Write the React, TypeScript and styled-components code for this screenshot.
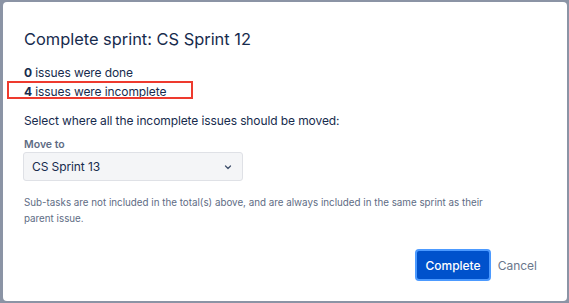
import { createGlobalStyle } from "styled-components";
import styled from "styled-components";

const GlobalStyle = createGlobalStyle`
  html, body {
    margin: 0;
    padding: 0;
    background: #8b94a5;
  }
  body {
    font-family: Inter, "Noto Sans", sans-serif;
    color: #172b4d;
  }
`;

const Backdrop = styled.div`
  width: 569px;
  height: 303px;
  padding: 2px 2px 2px 3px;
  box-sizing: border-box;
  overflow: hidden;
`;

const Modal = styled.div`
  background: #ffffff;
  border-radius: 4px;
  height: 100%;
  box-sizing: border-box;
  padding: 25px 21px 0 21px;
  display: flex;
  flex-direction: column;
`;

const Title = styled.h1`
  margin: 0;
  font-size: 16.4px;
  font-weight: 400;
  line-height: 24px;
  color: #172b4d;
`;

const Summary = styled.div`
  margin-top: 12px;
  display: flex;
  flex-direction: column;
`;

const Line = styled.div<{ $marked?: boolean }>`
  position: relative;
  font-size: 12px;
  letter-spacing: -0.1px;
  line-height: 19px;
  color: #172b4d;
  b {
    font-weight: 700;
  }
  ${(p) =>
    p.$marked &&
    `
    &::after {
      content: "";
      position: absolute;
      left: -17px;
      top: -1px;
      width: 186px;
      height: 18px;
      border: 2px solid #ee3a2e;
      box-sizing: border-box;
    }
  `}
`;

const Prompt = styled.p`
  margin: 10px 0 0;
  font-size: 12px;
  letter-spacing: -0.1px;
  line-height: 19px;
`;

const Field = styled.div`
  margin-top: 8px;
  display: flex;
  flex-direction: column;
`;

const Label = styled.label`
  font-size: 10.5px;
  font-weight: 600;
  line-height: 14px;
  color: #5e6c84;
`;

const Select = styled.div`
  width: 220px;
  height: 29px;
  box-sizing: border-box;
  margin-left: -1px;
  padding: 0 9px 0 8px;
  background: #f4f5f7;
  border: 1px solid #dfe1e6;
  border-radius: 3px;
  display: flex;
  align-items: center;
  justify-content: space-between;
  font-size: 12px;
  letter-spacing: -0.1px;
  color: #172b4d;
`;

const Note = styled.p`
  margin: 14px 0 0;
  font-size: 9.8px;
  line-height: 16px;
  color: #5e6c84;
  max-width: 470px;
`;

const Footer = styled.div`
  margin-top: 22px;
  display: flex;
  justify-content: flex-end;
  align-items: center;
  gap: 3px;
  padding-right: 5px;
`;

const PrimaryButton = styled.button`
  height: 32px;
  padding: 0 8px;
  background: #0052cc;
  border: 2px solid #4c9aff;
  border-radius: 4px;
  color: #ffffff;
  font-family: inherit;
  font-size: 12px;
  font-weight: 500;
`;

const LinkButton = styled.button`
  height: 32px;
  padding: 0 4px;
  background: none;
  border: none;
  color: #6b778c;
  font-family: inherit;
  font-size: 12px;
`;

function Chevron() {
  return (
    <svg width="10" height="10" viewBox="0 0 10 10" fill="none">
      <path d="M2.5 4 L5 6.5 L7.5 4" stroke="#42526e" strokeWidth="1.3" strokeLinecap="round" strokeLinejoin="round" />
    </svg>
  );
}

export default function App() {
  return (
    <>
      <GlobalStyle />
      <Backdrop>
        <Modal>
          <Title>Complete sprint: CS Sprint 12</Title>
          <Summary>
            <Line>
              <b>0</b> issues were done
            </Line>
            <Line $marked>
              <b>4</b> issues were incomplete
            </Line>
          </Summary>
          <Prompt>Select where all the incomplete issues should be moved:</Prompt>
          <Field>
            <Label>Move to</Label>
            <Select>
              <span>CS Sprint 13</span>
              <Chevron />
            </Select>
          </Field>
          <Note>
            Sub-tasks are not included in the total(s) above, and are always included in the same sprint as their
            parent issue.
          </Note>
          <Footer>
            <PrimaryButton>Complete</PrimaryButton>
            <LinkButton>Cancel</LinkButton>
          </Footer>
        </Modal>
      </Backdrop>
    </>
  );
}
